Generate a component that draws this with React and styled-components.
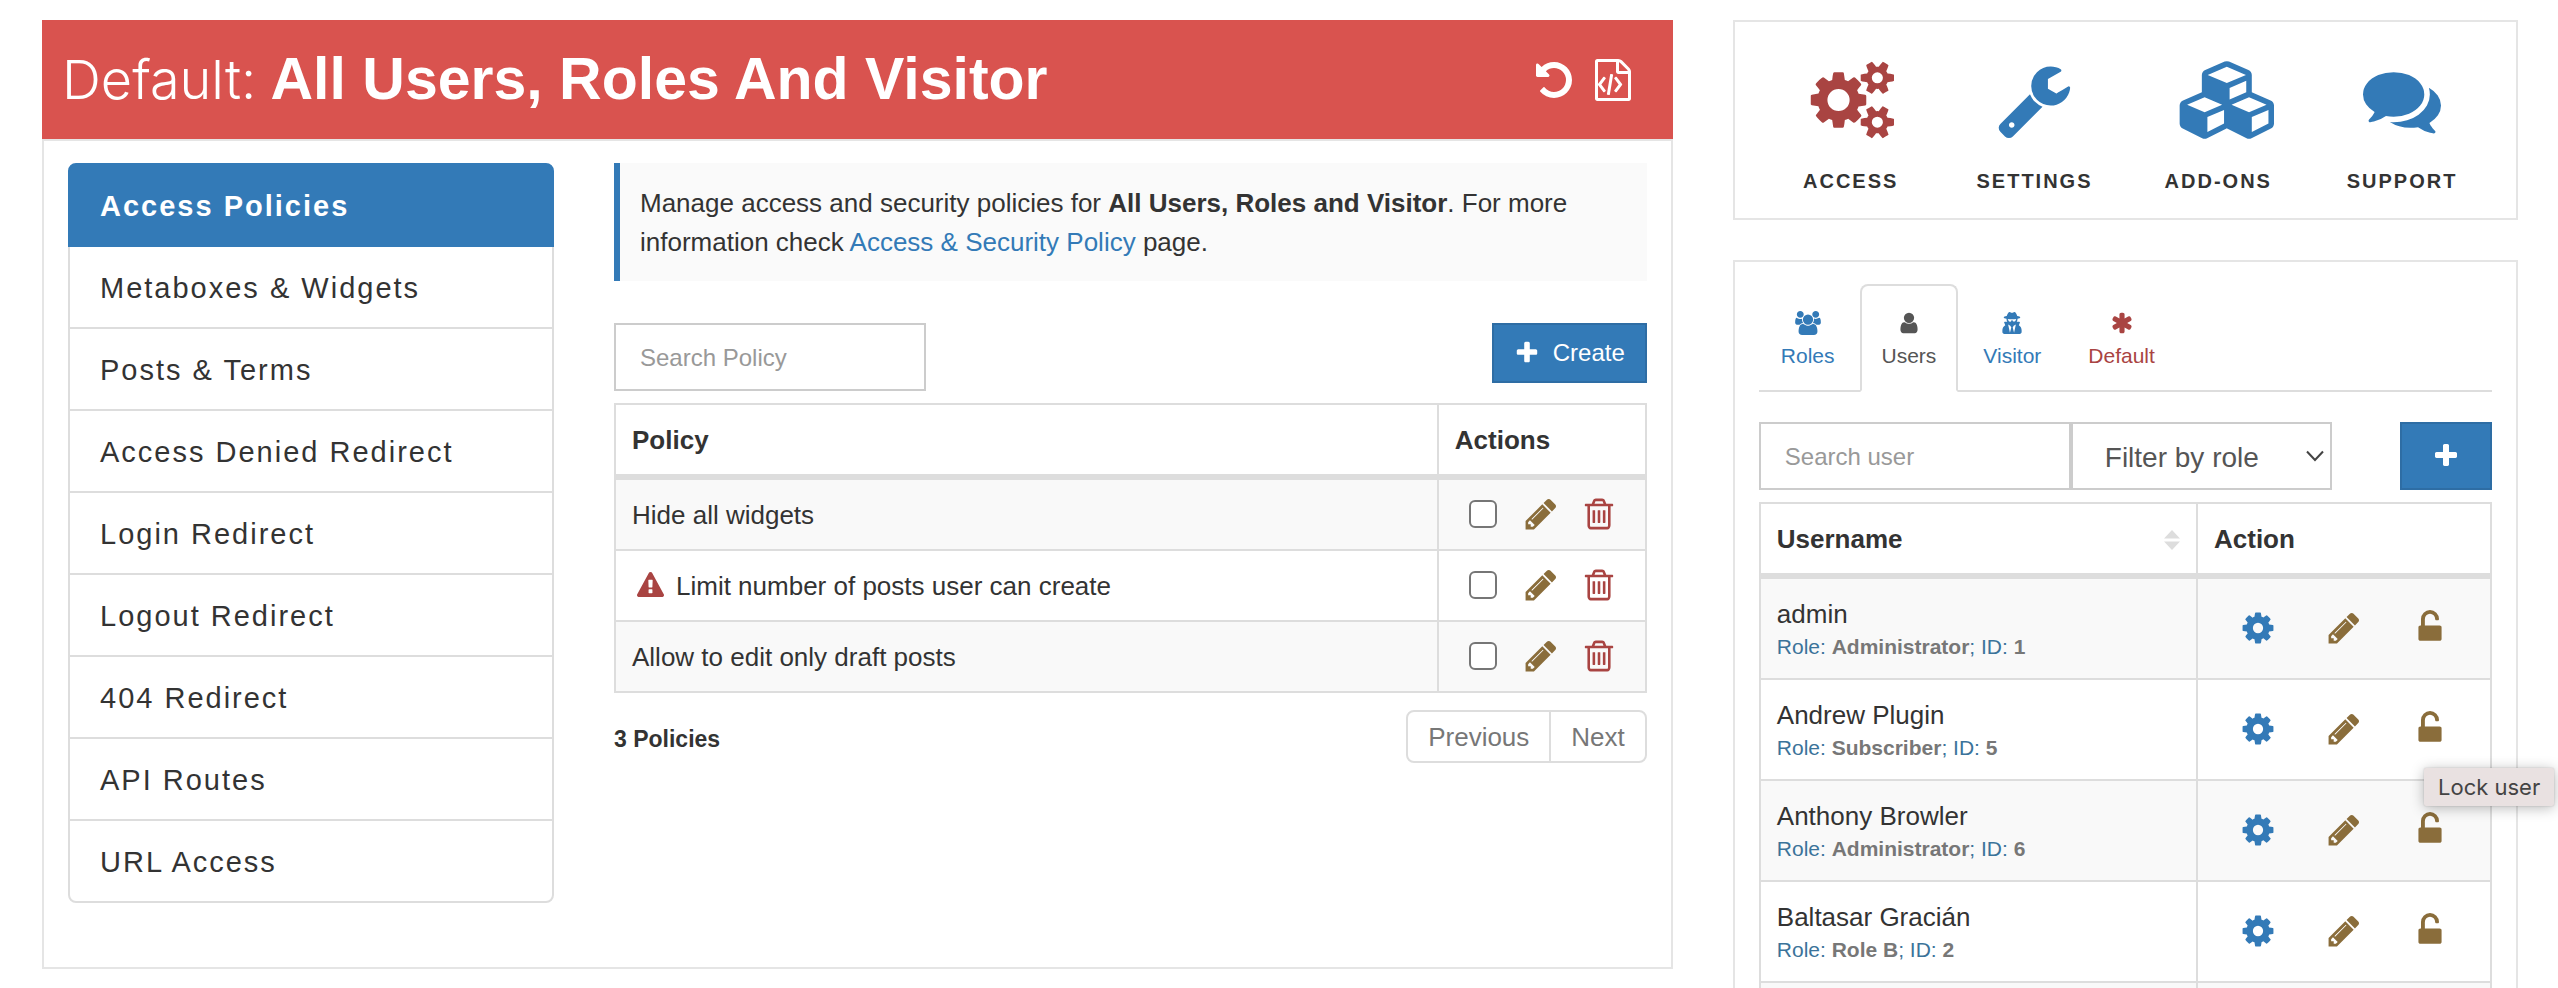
import React from 'react';
import styled, { createGlobalStyle, css } from 'styled-components';
import { FaUserSecret } from 'react-icons/fa';

const sans = '"Liberation Sans", Arial, sans-serif';
const blue = '#337ab7';
const red = '#a94442';
const brown = '#8a6d3b';
const line = '#dddddd';

const GlobalStyle = createGlobalStyle`
  *, *::before, *::after { box-sizing: border-box; }
  body { margin: 0; background: #fff; color: #333; font-family: ${sans}; font-size: 26px; line-height: 39px; }
  button, input, select { font-family: inherit; margin: 0; }
  a { text-decoration: none; }
`;

const PATHS = {
  undo: 'M1664 896q0 156-61 298t-164 245-245 164-298 61q-172 0-327-72.5t-264-204.5q-7-10-6.5-22.5t8.5-20.5l137-138q10-9 25-9 16 2 23 12 73 95 179 147t225 52q104 0 198.5-40.5t163.5-109.5 109.5-163.5 40.5-198.5-40.5-198.5-109.5-163.5-163.5-109.5-198.5-40.5q-98 0-188 35.5t-160 101.5l137 138q31 30 14 69-17 40-59 40h-448q-26 0-45-19t-19-45v-448q0-42 40-59 39-17 69 14l130 129q107-101 244.5-156.5t284.5-55.5q156 0 298 61t245 164 164 245 61 298z',
  fileCode: 'M1596 380q28 28 48 76t20 88v1152q0 40-28 68t-68 28h-1344q-40 0-68-28t-28-68v-1600q0-40 28-68t68-28h896q40 0 88 20t76 48zm-444-244v376h376q-10-29-22-41l-313-313q-12-12-41-22zm384 1528v-1024h-416q-40 0-68-28t-28-68v-416h-768v1536h1280zM480 768q8-11 21-12.5t24 6.5l51 38q11 8 12.5 21t-6.5 24l-182 243 182 243q8 11 6.5 24t-12.5 21l-51 38q-11 8-24 6.5t-21-12.5l-226-301q-14-19 0-38zm802 301q14 19 0 38l-226 301q-8 11-21 12.5t-24-6.5l-51-38q-11-8-12.5-21t6.5-24l182-243-182-243q-8-11-6.5-24t12.5-21l51-38q11-8 24-6.5t21 12.5zm-620 461q-13-2-20.5-13t-5.5-24l138-831q2-13 13-20.5t24-5.5l63 10q13 2 20.5 13t5.5 24l-138 831q-2 13-13 20.5t-24 5.5z',
  plus: 'M1600 736v192q0 40-28 68t-68 28h-416v416q0 40-28 68t-68 28h-192q-40 0-68-28t-28-68v-416h-416q-40 0-68-28t-28-68v-192q0-40 28-68t68-28h416v-416q0-40 28-68t68-28h192q40 0 68 28t28 68v416h416q40 0 68 28t28 68z',
  pencil: 'M491 1536l91-91-235-235-91 91v107h128v128h107zm523-928q0-22-22-22-10 0-17 7l-542 542q-7 7-7 17 0 22 22 22 10 0 17-7l542-542q7-7 7-17zm-54-192l416 416-832 832h-416v-416zm683 96q0 53-37 90l-166 166-416-416 166-165q36-38 90-38 53 0 91 38l235 234q37 39 37 91z',
  trash: 'M704 736v576q0 14-9 23t-23 9h-64q-14 0-23-9t-9-23v-576q0-14 9-23t23-9h64q14 0 23 9t9 23zm256 0v576q0 14-9 23t-23 9h-64q-14 0-23-9t-9-23v-576q0-14 9-23t23-9h64q14 0 23 9t9 23zm256 0v576q0 14-9 23t-23 9h-64q-14 0-23-9t-9-23v-576q0-14 9-23t23-9h64q14 0 23 9t9 23zm128 724v-948h-896v948q0 22 7 40.5t14.5 27 10.5 8.5h832q3 0 10.5-8.5t14.5-27 7-40.5zm-672-1076h448l-48-117q-7-9-17-11h-317q-10 2-17 11zm928 32v64q0 14-9 23t-23 9h-96v948q0 83-47 143.5t-113 60.5h-832q-66 0-113-58.5t-47-141.5v-952h-96q-14 0-23-9t-9-23v-64q0-14 9-23t23-9h309l70-167q15-37 54-63t79-26h320q40 0 79 26t54 63l70 167h309q14 0 23 9t9 23z',
  warning: 'M1024 1375v-190q0-14-9.5-23.5t-22.5-9.5h-192q-13 0-22.5 9.5t-9.5 23.5v190q0 14 9.5 23.5t22.5 9.5h192q13 0 22.5-9.5t9.5-23.5zm-2-374l18-459q0-12-10-19-13-11-24-11h-220q-11 0-24 11-10 7-10 21l17 457q0 10 10 16.5t24 6.5h185q14 0 23.5-6.5t10.5-16.5zm-14-934l768 1408q35 63-2 126-17 29-46.5 46t-63.5 17h-1536q-34 0-63.5-17t-46.5-46q-37-63-2-126l768-1408q17-31 47-49t65-18 65 18 47 49z',
  cog: 'M1152 896q0-106-75-181t-181-75-181 75-75 181 75 181 181 75 181-75 75-181zm512-109v222q0 12-8 23t-20 13l-185 28q-19 54-39 91 35 50 107 138 10 12 10 25t-9 23q-27 37-99 108t-94 71q-12 0-26-9l-138-108q-44 23-91 38-16 136-29 186-7 28-36 28h-222q-14 0-24.5-8.5t-11.5-21.5l-28-184q-49-16-90-37l-141 107q-10 9-25 9-14 0-25-11-126-114-165-168-7-10-7-23 0-12 8-23 15-21 51-66.5t54-70.5q-27-50-41-99l-183-27q-13-2-21-12.5t-8-23.5v-222q0-12 8-23t19-13l186-28q14-46 39-92-40-57-107-138-10-12-10-24 0-10 9-23 26-36 98.5-107.5t94.5-71.5q13 0 26 10l138 107q44-23 91-38 16-136 29-186 7-28 36-28h222q14 0 24.5 8.5t11.5 21.5l28 184q49 16 90 37l142-107q9-9 24-9 13 0 25 10 129 119 165 170 7 8 7 22 0 12-8 23-15 21-51 66.5t-54 70.5q26 50 41 98l183 28q13 2 21 12.5t8 23.5z',
  unlock: 'M1376 768q40 0 68 28t28 68v576q0 40-28 68t-68 28h-960q-40 0-68-28t-28-68v-576q0-40 28-68t68-28h32v-320q0-185 131.5-316.5t316.5-131.5 316.5 131.5 131.5 316.5q0 26-19 45t-45 19h-64q-26 0-45-19t-19-45q0-106-75-181t-181-75-181 75-75 181v320h736z',
  cogs: 'M832 896q0-106-75-181t-181-75-181 75-75 181 75 181 181 75 181-75 75-181zm768 512q0-52-38-90t-90-38-90 38-38 90q0 53 37.5 90.5t90.5 37.5 90.5-37.5 37.5-90.5zm0-1024q0-52-38-90t-90-38-90 38-38 90q0 53 37.5 90.5t90.5 37.5 90.5-37.5 37.5-90.5zm-384 421v185q0 10-7 19.5t-16 10.5l-155 24q-11 35-32 76 34 48 90 115 7 11 7 20 0 12-7 19-23 30-82.5 89.5t-78.5 59.5q-11 0-21-7l-115-90q-37 19-77 31-11 108-23 155-7 24-30 24h-186q-11 0-20-7.5t-10-17.5l-23-153q-34-10-75-31l-118 89q-7 7-20 7-11 0-21-8-144-133-144-160 0-9 7-19 10-14 41-53t47-61q-23-44-35-82l-152-24q-10-1-17-9.5t-7-19.5v-185q0-10 7-19.5t16-10.5l155-24q11-35 32-76-34-48-90-115-7-11-7-20 0-12 7-20 22-30 82-89t79-59q11 0 21 7l115 90q34-18 77-32 11-108 23-154 7-24 30-24h186q11 0 20 7.5t10 17.5l23 153q34 10 75 31l118-89q8-7 20-7 11 0 21 8 144 133 144 160 0 8-7 19-12 16-42 54t-45 60q23 48 34 82l152 23q10 2 17 10.5t7 19.5zm640 533v140q0 16-149 31-12 27-30 52 51 113 51 138 0 4-4 7-122 71-124 71-8 0-46-47t-52-68q-20 2-30 2t-30-2q-14 21-52 68t-46 47q-2 0-124-71-4-3-4-7 0-25 51-138-18-25-30-52-149-15-149-31v-140q0-16 149-31 13-29 30-52-51-113-51-138 0-4 4-7 4-2 35-20t59-34 30-16q8 0 46 46.5t52 67.5q20-2 30-2t30 2q51-71 92-112l6-2q4 0 124 70 4 3 4 7 0 25-51 138 17 23 30 52 149 15 149 31zm0-1024v140q0 16-149 31-12 27-30 52 51 113 51 138 0 4-4 7-122 71-124 71-8 0-46-47t-52-68q-20 2-30 2t-30-2q-14 21-52 68t-46 47q-2 0-124-71-4-3-4-7 0-25 51-138-18-25-30-52-149-15-149-31v-140q0-16 149-31 13-29 30-52-51-113-51-138 0-4 4-7 4-2 35-20t59-34 30-16q8 0 46 46.5t52 67.5q20-2 30-2t30 2q51-71 92-112l6-2q4 0 124 70 4 3 4 7 0 25-51 138 17 23 30 52 149 15 149 31z',
  wrench: 'M448 1472q0-26-19-45t-45-19-45 19-19 45 19 45 45 19 45-19 19-45zm644-420l-682 682q-37 37-90 37-52 0-91-37l-106-108q-38-36-38-90 0-53 38-91l681-681q39 98 114.5 173.5t173.5 114.5zm634-435q0 39-23 106-47 134-164.5 217.5t-258.5 83.5q-185 0-316.5-131.5t-131.5-316.5 131.5-316.5 316.5-131.5q58 0 121.5 16.5t107.5 46.5q16 11 16 28t-16 28l-293 169v224l193 107q5-3 79-48.5t135.5-81 70.5-35.5q15 0 23.5 10t8.5 25z',
  cubes: 'M640 1632l384-192v-314l-384 164v342zm-64-454l404-173-404-173-404 173zm1088 454l384-192v-314l-384 164v342zm-64-454l404-173-404-173-404 173zm-448-293l384-165v-266l-384 164v267zm-64-379l441-189-441-189-441 189zm1088 518v416q0 36-19 67t-52 47l-448 224q-25 14-57 14t-57-14l-448-224q-4-2-7-4-2 2-7 4l-448 224q-25 14-57 14t-57-14l-448-224q-33-16-52-47t-19-67v-416q0-38 21.5-70t56.5-48l434-186v-400q0-38 21.5-70t56.5-48l448-192q23-10 50-10t50 10l448 192q35 16 56.5 48t21.5 70v400l434 186q36 16 57 48t21 70z',
  comments: 'M1408 768q0 139-94 257t-256.5 186.5-353.5 68.5q-86 0-176-16-124 88-278 128-36 9-86 16h-3q-11 0-20.5-8t-11.5-21q-1-3-1-6.5t.5-6.5 2-6l2.5-5 3.5-5.5 4-5 4.5-5 4-4.5q5-6 23-25t26-29.5 22.5-29 25-38.5 20.5-44q-124-72-195-177t-71-224q0-139 94-257t256.5-186.5 353.5-68.5 353.5 68.5 256.5 186.5 94 257zm384 256q0 120-71 224.5t-195 176.5q10 24 20.5 44t25 38.5 22.5 29 26 29.5 23 25q1 1 4 4.5t4.5 5 4 5 3.5 5.5l2.5 5 2 6 .5 6.5-1 6.5q-3 14-13 22t-22 7q-50-7-86-16-154-40-278-128-90 16-176 16-271 0-472-132 58 4 88 4 161 0 309-45t264-129q125-92 192-212t67-254q0-77-23-152 129 71 204 178t75 230z',
  group: 'M593 896q-162 5-265 128h-134q-82 0-138-40.5t-56-118.5q0-353 124-353 6 0 43.5 21t97.5 42.5 119 21.5q67 0 133-23-5 37-5 66 0 143 81 264zm1071 637q0 120-73 189.5t-194 69.5h-874q-121 0-194-69.5t-73-189.5q0-53 3.5-103.5t14-109 26.5-108.5 43-97.5 62-81 85.5-53.5 111.5-20q10 0 43 21.5t73 48 107 48 135 21.5 135-21.5 107-48 73-48 43-21.5q61 0 111.5 20t85.5 53.5 62 81 43 97.5 26.5 108.5 14 109 3.5 103.5zm-1024-1277q0 106-75 181t-181 75-181-75-75-181 75-181 181-75 181 75 75 181zm704 384q0 159-112.5 271.5t-271.5 112.5-271.5-112.5-112.5-271.5 112.5-271.5 271.5-112.5 271.5 112.5 112.5 271.5zm576 225q0 78-56 118.5t-138 40.5h-134q-103-123-265-128 81-121 81-264 0-29-5-66 66 23 133 23 59 0 119-21.5t97.5-42.5 43.5-21q124 0 124 353zm-128-609q0 106-75 181t-181 75-181-75-75-181 75-181 181-75 181 75 75 181z',
  user: 'M1536 1399q0 109-62.5 187t-150.5 78h-854q-88 0-150.5-78t-62.5-187q0-85 8.5-160.5t31.5-152 58.5-131 94-89 134.5-34.5q131 128 313 128t313-128q76 0 134.5 34.5t94 89 58.5 131 31.5 152 8.5 160.5zm-256-887q0 159-112.5 271.5t-271.5 112.5-271.5-112.5-112.5-271.5 112.5-271.5 271.5-112.5 271.5 112.5 112.5 271.5z',
  asterisk: 'M1546 1050q46 26 59.5 77.5t-12.5 97.5l-64 110q-26 46-77.5 59.5t-97.5-12.5l-266-153v307q0 52-38 90t-90 38h-128q-52 0-90-38t-38-90v-307l-266 153q-46 26-97.5 12.5t-77.5-59.5l-64-110q-26-46-12.5-97.5t59.5-77.5l266-154-266-154q-46-26-59.5-77.5t12.5-97.5l64-110q26-46 77.5-59.5t97.5 12.5l266 153v-307q0-52 38-90t90-38h128q52 0 90 38t38 90v307l266-153q46-26 97.5-12.5t77.5 59.5l64 110q26 46 12.5 97.5t-59.5 77.5l-266 154z',
};

/* Left edge and width of the drawings that do not sit on the square grid. */
const BOXES = { cogs: [-128, 1984], cubes: [-384, 2560], group: [0, 1920] };

const Glyph = styled.svg`
  display: block;
  flex: none;
  fill: currentColor;
`;

function Icon({ name, size }) {
  const [left, width] = BOXES[name] || [0, 1792];
  return (
    <Glyph
      viewBox={`${left} 0 ${width} 1792`}
      width={Math.round((size * width) / 1792)}
      height={size}
      aria-hidden="true"
    >
      <path d={PATHS[name]} />
    </Glyph>
  );
}

/* ---------- page ---------- */

const Page = styled.div`
  display: grid;
  grid-template-columns: minmax(0, 27fr) minmax(0, 13fr);
  gap: 60px;
  align-items: start;
  height: 100vh;
  overflow: hidden;
  padding: 20px 40px 0 42px;
`;

const Header = styled.header`
  display: flex;
  align-items: center;
  justify-content: space-between;
  height: 119px;
  padding: 0 39px 0 20px;
  background: #d9534f;
  color: #fff;
`;

const Title = styled.h1`
  margin: 0;
  font-size: 59px;
  line-height: 72px;
  font-weight: 700;
  white-space: nowrap;
`;

const TitleLabel = styled.span`
  font-family: Inter, ${sans};
  font-size: 54px;
  font-weight: 300;
`;

const HeaderActions = styled.div`
  display: flex;
  gap: 17px;
`;

const IconButton = styled.button`
  display: flex;
  align-items: center;
  justify-content: center;
  padding: 0;
  border: 0;
  background: none;
  color: ${(p) => p.$color || 'inherit'};
  cursor: pointer;
`;

const MainBody = styled.div`
  display: grid;
  grid-template-columns: minmax(0, 8fr) minmax(0, 17fr);
  gap: 60px;
  align-items: start;
  padding: 22px 24px 64px;
  border: 2px solid #e5e5e5;
`;

/* ---------- side navigation ---------- */

const FeatureNav = styled.nav`
  display: flex;
  flex-direction: column;
`;

const FeatureLink = styled.a`
  display: flex;
  align-items: center;
  height: 84px;
  margin-bottom: -2px;
  padding: 2px 30px 0;
  border: 2px solid ${line};
  color: #333;
  font-size: 29px;
  letter-spacing: 2px;

  &:first-child { border-radius: 8px 8px 0 0; }
  &:last-child { margin-bottom: 0; border-radius: 0 0 8px 8px; }

  ${(p) => p.$active && css`
    z-index: 1;
    border-color: ${blue};
    background: ${blue};
    color: #fff;
    font-weight: 700;
  `}
`;

/* ---------- shared controls ---------- */

const Note = styled.p`
  margin: 0 0 42px;
  padding: 21px 20px 19px;
  border-left: 6px solid ${blue};
  background: #fafafa;

  a { color: ${blue}; }
`;

const Toolbar = styled.div`
  display: flex;
  align-items: flex-start;
  margin-bottom: 12px;
`;

const SearchInput = styled.input`
  width: 312px;
  height: 68px;
  padding: 2px 24px 0;
  border: 2px solid #ccc;
  border-radius: 0;
  background: #fff;
  color: #555;
  font-size: 24px;
  outline: none;

  &::placeholder { color: #999; opacity: 1; }
`;

const PrimaryButton = styled.button`
  display: flex;
  align-items: center;
  justify-content: center;
  gap: 13px;
  height: ${(p) => (p.$tall ? 68 : 60)}px;
  margin-left: auto;
  padding: 0 ${(p) => (p.$tall ? 30 : 20)}px;
  border: 2px solid #2e6da4;
  background: ${blue};
  color: #fff;
  font-size: 24px;
  cursor: pointer;
`;

const DataTable = styled.table`
  width: 100%;
  table-layout: fixed;
  border: 2px solid ${line};
  border-bottom: 0;
  border-collapse: separate;
  border-spacing: 0;

  th, td {
    padding: 0 16px;
    border-bottom: 2px solid ${line};
    text-align: left;
    vertical-align: middle;
  }
  th { height: 75px; padding-top: 2px; border-bottom-width: 6px; }
  td { height: ${(p) => p.$rowHeight}px; }
  th + th, td + td { border-left: 2px solid ${line}; }
  tbody tr:nth-child(odd) { background: #f9f9f9; }
  col:last-child { width: ${(p) => p.$actionWidth}px; }
`;

const RowActions = styled.div`
  display: flex;
  align-items: center;
  gap: ${(p) => p.$gap}px;
  padding: 0 0 1px ${(p) => p.$inset}px;

  > * { flex: none; width: 32px; }
`;

const CheckSlot = styled.span`
  display: flex;
  justify-content: center;
`;

const Checkbox = styled.input`
  appearance: none;
  width: 28px;
  height: 28px;
  border: 2px solid #767676;
  border-radius: 6px;
  background: #fff;
`;

const PolicyName = styled.span`
  display: flex;
  align-items: center;
  gap: 12px;
  padding-top: 2px;
`;

const WarningMark = styled.span`
  padding: 0 0 2px 5px;
  color: ${red};
`;

const TableFooter = styled.div`
  display: flex;
  align-items: center;
  justify-content: space-between;
  margin-top: 17px;
`;

const Count = styled.strong`
  padding-top: 5px;
  font-size: 23px;
`;

const Pager = styled.div`
  display: flex;
  border: 2px solid ${line};
  border-radius: 8px;
`;

const PageButton = styled.button`
  height: 49px;
  padding: 2px 20px 0;
  border: 0;
  background: none;
  color: #777;
  font-size: 26px;

  & + & { border-left: 2px solid ${line}; }
`;

/* ---------- right column ---------- */

const Side = styled.aside`
  display: flex;
  flex-direction: column;
  gap: 40px;
`;

const AreaNav = styled.nav`
  display: grid;
  grid-template-columns: repeat(4, 1fr);
  padding: 39px 22px 25px 24px;
  border: 2px solid #e5e5e5;
`;

const AreaLink = styled.a`
  display: flex;
  flex-direction: column;
  align-items: center;
  gap: 30px;
  color: ${(p) => (p.$active ? red : blue)};
`;

const AreaName = styled.span`
  color: #333;
  font-size: 20px;
  line-height: 24px;
  font-weight: 700;
  letter-spacing: 2px;
  text-transform: uppercase;
`;

const UsersPanel = styled.section`
  padding: 22px 24px;
  border: 2px solid #e5e5e5;
`;

const Tabs = styled.div`
  display: flex;
  gap: 3px;
  height: 108px;
  margin-bottom: 30px;
  border-bottom: 2px solid ${line};
`;

const Tab = styled.button`
  display: flex;
  flex-direction: column;
  align-items: center;
  gap: 6px;
  height: 108px;
  padding: 25px 20px 0;
  border: 2px solid ${(p) => (p.$active ? line : 'transparent')};
  border-bottom-color: ${(p) => (p.$active ? '#fff' : 'transparent')};
  border-radius: 8px 8px 0 0;
  background: ${(p) => (p.$active ? '#fff' : 'none')};
  color: ${(p) => p.$color};
  font-size: 21px;
  line-height: 30px;
`;

const TabIcon = styled.span`
  display: flex;
  align-items: center;
  height: 24px;
`;

const RoleFilter = styled.div`
  display: flex;
  align-items: center;
  width: 261px;

  svg { flex: none; margin-left: -26px; pointer-events: none; }
`;

const Select = styled.select`
  appearance: none;
  width: 100%;
  height: 68px;
  padding: 2px 32px 0;
  border: 2px solid #ccc;
  border-radius: 0;
  background: #fff;
  color: #555;
  font-size: 28px;
`;

const SortHeading = styled.span`
  display: flex;
  align-items: center;
  justify-content: space-between;
`;

const UserName = styled.div`
  padding-top: 4px;
  line-height: 32px;
`;

const UserMeta = styled.div`
  color: #3b739a;
  font-size: 21px;
  line-height: 34px;

  strong { color: #777; }
`;

const TipAnchor = styled.span`
  position: relative;
  display: flex;
  justify-content: center;
`;

const Tooltip = styled.span`
  position: absolute;
  top: 57px;
  left: 10px;
  z-index: 2;
  padding: 0 14px;
  border-radius: 2px;
  background: #e9e1e1;
  box-shadow: 0 2px 14px rgba(0, 0, 0, 0.28), 0 0 2px rgba(0, 0, 0, 0.2);
  color: #444;
  font-family: Inter, ${sans};
  font-size: 22px;
  line-height: 38px;
  white-space: nowrap;
`;

const FEATURES = [
  'Access Policies', 'Metaboxes & Widgets', 'Posts & Terms', 'Access Denied Redirect',
  'Login Redirect', 'Logout Redirect', '404 Redirect', 'API Routes', 'URL Access',
];

const POLICIES = [
  { name: 'Hide all widgets' },
  { name: 'Limit number of posts user can create', warning: true },
  { name: 'Allow to edit only draft posts' },
];

const AREAS = [
  { name: 'Access', icon: 'cogs', active: true },
  { name: 'Settings', icon: 'wrench' },
  { name: 'Add-ons', icon: 'cubes' },
  { name: 'Support', icon: 'comments' },
];

const USERS = [
  { name: 'admin', role: 'Administrator', id: 1 },
  { name: 'Andrew Plugin', role: 'Subscriber', id: 5, tip: 'Lock user' },
  { name: 'Anthony Browler', role: 'Administrator', id: 6 },
  { name: 'Baltasar Gracián', role: 'Role B', id: 2 },
];

function PolicyArea() {
  return (
    <section>
      <Note>
        Manage access and security policies for <strong>All Users, Roles and Visitor</strong>. For more
        <br />
        information check <a href="#policy">Access &amp; Security Policy</a> page.
      </Note>
      <Toolbar>
        <SearchInput type="search" placeholder="Search Policy" aria-label="Search Policy" />
        <PrimaryButton type="button"><Icon name="plus" size={26} />Create</PrimaryButton>
      </Toolbar>
      <DataTable $rowHeight={71} $actionWidth={208}>
        <colgroup><col /><col /></colgroup>
        <thead><tr><th>Policy</th><th>Actions</th></tr></thead>
        <tbody>
          {POLICIES.map((p) => (
            <tr key={p.name}>
              <td>
                <PolicyName>
                  {p.warning && <WarningMark><Icon name="warning" size={27} /></WarningMark>}
                  {p.name}
                </PolicyName>
              </td>
              <td>
                <RowActions $gap={26} $inset={12}>
                  <CheckSlot><Checkbox type="checkbox" aria-label={`Attach ${p.name}`} /></CheckSlot>
                  <IconButton type="button" $color={brown} aria-label="Edit"><Icon name="pencil" size={36} /></IconButton>
                  <IconButton type="button" $color={red} aria-label="Delete"><Icon name="trash" size={36} /></IconButton>
                </RowActions>
              </td>
            </tr>
          ))}
        </tbody>
      </DataTable>
      <TableFooter>
        <Count>3 Policies</Count>
        <Pager>
          <PageButton type="button">Previous</PageButton>
          <PageButton type="button">Next</PageButton>
        </Pager>
      </TableFooter>
    </section>
  );
}

function UsersArea() {
  return (
    <UsersPanel>
      <Tabs role="tablist">
        <Tab type="button" role="tab" $color={blue}><TabIcon><Icon name="group" size={24} /></TabIcon>Roles</Tab>
        <Tab type="button" role="tab" aria-selected="true" $active $color="#555"><TabIcon><Icon name="user" size={24} /></TabIcon>Users</Tab>
        <Tab type="button" role="tab" $color={blue}><TabIcon><FaUserSecret size={22} /></TabIcon>Visitor</Tab>
        <Tab type="button" role="tab" $color={red}><TabIcon><Icon name="asterisk" size={24} /></TabIcon>Default</Tab>
      </Tabs>
      <Toolbar>
        <SearchInput type="search" placeholder="Search user" aria-label="Search user" />
        <RoleFilter>
          <Select aria-label="Filter by role" defaultValue="">
            <option value="">Filter by role</option>
          </Select>
          <svg width="18" height="12" viewBox="0 0 18 12" fill="none" stroke="#444" strokeWidth="2" aria-hidden="true">
            <path d="M1 1.5l8 8.5 8-8.5" />
          </svg>
        </RoleFilter>
        <PrimaryButton type="button" $tall aria-label="Add user"><Icon name="plus" size={28} /></PrimaryButton>
      </Toolbar>
      <DataTable $rowHeight={101} $actionWidth={294}>
        <colgroup><col /><col /></colgroup>
        <thead>
          <tr>
            <th>
              <SortHeading>
                Username
                <svg width="16" height="20" viewBox="0 0 16 20" fill="#dddddd" aria-hidden="true">
                  <path d="M8 0l8 8.500H0zM0 11.500h16L8 20z" />
                </svg>
              </SortHeading>
            </th>
            <th>Action</th>
          </tr>
        </thead>
        <tbody>
          {USERS.map((u) => (
            <tr key={u.name}>
              <td>
                <UserName>{u.name}</UserName>
                <UserMeta>Role: <strong>{u.role}</strong>; ID: <strong>{u.id}</strong></UserMeta>
              </td>
              <td>
                <RowActions $gap={54} $inset={28}>
                  <IconButton type="button" $color={blue} aria-label="Manage access"><Icon name="cog" size={36} /></IconButton>
                  <IconButton type="button" $color={brown} aria-label="Edit user"><Icon name="pencil" size={36} /></IconButton>
                  <TipAnchor>
                    <IconButton type="button" $color={brown} aria-label="Lock user"><Icon name="unlock" size={36} /></IconButton>
                    {u.tip && <Tooltip role="tooltip">{u.tip}</Tooltip>}
                  </TipAnchor>
                </RowActions>
              </td>
            </tr>
          ))}
          <tr><td /><td /></tr>
        </tbody>
      </DataTable>
    </UsersPanel>
  );
}

export default function App() {
  return (
    <>
      <GlobalStyle />
      <Page>
        <main>
          <Header>
            <Title><TitleLabel>Default:</TitleLabel> All Users, Roles And Visitor</Title>
            <HeaderActions>
              <IconButton type="button" aria-label="Reset"><Icon name="undo" size={42} /></IconButton>
              <IconButton type="button" aria-label="Show as code"><Icon name="fileCode" size={42} /></IconButton>
            </HeaderActions>
          </Header>
          <MainBody>
            <FeatureNav>
              {FEATURES.map((f, i) => (
                <FeatureLink key={f} href={`#feature-${i}`} $active={i === 0}>{f}</FeatureLink>
              ))}
            </FeatureNav>
            <PolicyArea />
          </MainBody>
        </main>
        <Side>
          <AreaNav>
            {AREAS.map((a) => (
              <AreaLink key={a.name} href={`#${a.icon}`} $active={a.active}>
                <Icon name={a.icon} size={78} />
                <AreaName>{a.name}</AreaName>
              </AreaLink>
            ))}
          </AreaNav>
          <UsersArea />
        </Side>
      </Page>
    </>
  );
}
